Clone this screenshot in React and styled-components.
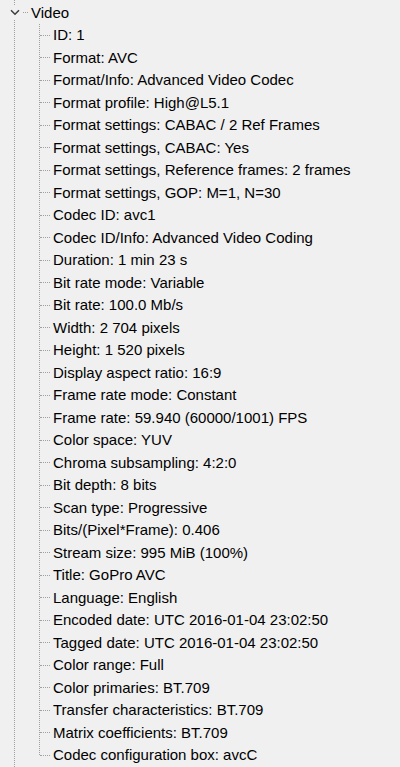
import styled, { createGlobalStyle } from 'styled-components';

const GlobalStyle = createGlobalStyle`
  html, body {
    margin: 0;
    padding: 0;
    background: #f0f0f0;
  }
  body {
    font-family: 'Liberation Sans', Arial, sans-serif;
  }
`;

const LINE = '#a0a0a0';
const ROW_HEIGHT = '22.5px';

const StyledTree = styled.div`
  position: relative;
  min-height: 100vh;
  padding-top: 1px;
  box-sizing: border-box;
  color: #000;
  font-size: 15px;
  overflow: hidden;

  &:before {
    content: '';
    position: absolute;
    left: 14px;
    top: 0;
    bottom: 0;
    border-left: 1px dotted ${LINE};
  }
`;

const RootRow = styled.div`
  position: relative;
  display: flex;
  align-items: center;
  height: ${ROW_HEIGHT};
  padding-left: 8px;
`;

const Expander = styled.span`
  display: inline-flex;
  align-items: center;
  justify-content: center;
  width: 13px;
  height: 13px;
  background: #f0f0f0;
  position: relative;
  z-index: 1;
`;

const Stub = styled.span`
  width: 5px;
  margin: 0 3px 0 2px;
  border-top: 1px dotted ${LINE};
`;

const ChildList = styled.ul`
  position: relative;
  list-style: none;
  margin: 0 0 0 39px;
  padding: 0;

  &:before {
    content: '';
    position: absolute;
    left: 0;
    top: 0;
    bottom: 11px;
    border-left: 1px dotted ${LINE};
  }
`;

const ChildItem = styled.li`
  position: relative;
  display: flex;
  align-items: center;
  height: ${ROW_HEIGHT};
  padding-left: 14px;
  white-space: nowrap;

  &:after {
    content: '';
    position: absolute;
    left: 1px;
    top: 50%;
    width: 10px;
    border-top: 1px dotted ${LINE};
  }
`;

const ChevronDown = () => (
  <svg width="10" height="7" viewBox="0 0 10 7">
    <path d="M1 1.2 L5 5.2 L9 1.2" fill="none" stroke="#3c3c3c" strokeWidth="1.5" />
  </svg>
);

const fields = [
  'ID: 1',
  'Format: AVC',
  'Format/Info: Advanced Video Codec',
  'Format profile: High@L5.1',
  'Format settings: CABAC / 2 Ref Frames',
  'Format settings, CABAC: Yes',
  'Format settings, Reference frames: 2 frames',
  'Format settings, GOP: M=1, N=30',
  'Codec ID: avc1',
  'Codec ID/Info: Advanced Video Coding',
  'Duration: 1 min 23 s',
  'Bit rate mode: Variable',
  'Bit rate: 100.0 Mb/s',
  'Width: 2 704 pixels',
  'Height: 1 520 pixels',
  'Display aspect ratio: 16:9',
  'Frame rate mode: Constant',
  'Frame rate: 59.940 (60000/1001) FPS',
  'Color space: YUV',
  'Chroma subsampling: 4:2:0',
  'Bit depth: 8 bits',
  'Scan type: Progressive',
  'Bits/(Pixel*Frame): 0.406',
  'Stream size: 995 MiB (100%)',
  'Title: GoPro AVC',
  'Language: English',
  'Encoded date: UTC 2016-01-04 23:02:50',
  'Tagged date: UTC 2016-01-04 23:02:50',
  'Color range: Full',
  'Color primaries: BT.709',
  'Transfer characteristics: BT.709',
  'Matrix coefficients: BT.709',
  'Codec configuration box: avcC',
];

const App = () => {
  return (
    <>
      <GlobalStyle />
      <StyledTree>
        <RootRow>
          <Expander>
            <ChevronDown />
          </Expander>
          <Stub />
          <span>Video</span>
        </RootRow>
        <ChildList>
          {fields.map((text) => (
            <ChildItem key={text}>{text}</ChildItem>
          ))}
        </ChildList>
      </StyledTree>
    </>
  );
};

export default App;
